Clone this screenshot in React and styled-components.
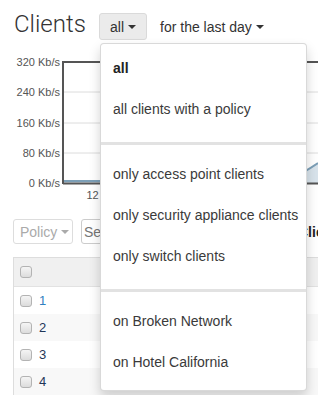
import React from "react";
import styled, { createGlobalStyle } from "styled-components";

const Global = createGlobalStyle`
  html, body { margin: 0; padding: 0; background: #fff; }
  body {
    font-family: "Liberation Sans", Arial, sans-serif;
    font-size: 14px;
    color: #333;
    overflow: hidden;
    width: 318px;
    height: 395px;
  }
  * { box-sizing: border-box; }
`;

const Page = styled.div`
  width: 318px;
  height: 395px;
  overflow: hidden;
  position: relative;
`;

const Header = styled.div`
  display: flex;
  align-items: flex-start;
  padding: 13px 0 0 14px;
  height: 40px;
`;

const Title = styled.h1`
  margin: -3px 0 0 0;
  font-family: Roboto, "Liberation Sans", sans-serif;
  font-weight: 300;
  font-size: 24px;
  line-height: 28px;
  color: #333;
  width: 85px;
`;

const MenuAnchor = styled.div`
  position: relative;
`;

const FilterButton = styled.button`
  display: flex;
  align-items: center;
  height: 27px;
  padding: 0 10px;
  margin: 0 ${(p) => (p.$gap ? "0 0 2px" : "0")};
  font-family: "Liberation Sans", Arial, sans-serif;
  font-size: 14px;
  color: #333;
  background: ${(p) => (p.$active ? "#ebebeb" : "transparent")};
  border: 1px solid ${(p) => (p.$active ? "#dadada" : "transparent")};
  border-radius: 3px;
  cursor: pointer;
`;

const Caret = styled.span`
  display: inline-block;
  width: 0;
  height: 0;
  margin-left: 4px;
  border-top: 4px solid ${(p) => p.$color || "#333"};
  border-left: 4px solid transparent;
  border-right: 4px solid transparent;
`;

const Menu = styled.ul`
  position: absolute;
  top: calc(100% + 3px);
  left: 1px;
  width: 207px;
  margin: 0;
  padding: 4px 0 7px;
  list-style: none;
  background: #fff;
  border: 1px solid rgba(0, 0, 0, 0.15);
  border-radius: 4px;
  box-shadow: 0 6px 12px rgba(0, 0, 0, 0.175);
  z-index: 10;
`;

const MenuItem = styled.li`
  height: 41px;
  line-height: 41px;
  padding: 0 12px;
  font-size: 14px;
  white-space: nowrap;
  color: ${(p) => (p.$selected ? "#222" : "#3a3a3a")};
  font-weight: ${(p) => (p.$selected ? 700 : 400)};
`;

const Divider = styled.li`
  height: 3px;
  margin: 12px 0 9px;
  background: #e2e2e2;
`;

const ChartBox = styled.div`
  margin-top: 10px;
  height: 155px;
`;

const Toolbar = styled.div`
  display: flex;
  align-items: center;
  margin: 14px 0 0 13px;
  height: 25px;
  gap: 8px;
`;

const PolicyButton = styled.button`
  display: flex;
  align-items: center;
  height: 25px;
  width: 60px;
  padding: 0 6px;
  font-family: "Liberation Sans", Arial, sans-serif;
  font-size: 14px;
  color: #aaa;
  background: #fff;
  border: 1px solid #ddd;
  border-radius: 3px;
`;

const Search = styled.input`
  height: 25px;
  width: 200px;
  padding: 0 2px;
  font-family: "Liberation Sans", Arial, sans-serif;
  font-size: 14px;
  color: #555;
  border: 1px solid #ccc;
  border-radius: 3px;
  flex: none;
`;

const CountLabel = styled.span`
  margin-left: 9px;
  font-weight: 700;
  font-size: 14px;
  color: #222;
  white-space: nowrap;
`;

const Table = styled.div`
  margin: 13px 0 0 13px;
  border-left: 1px solid #ddd;
  border-top: 1px solid #ddd;
  width: 400px;
`;

const Row = styled.div`
  display: flex;
  align-items: center;
  height: ${(p) => (p.$head ? "29px" : "27px")};
  padding-left: 6px;
  background: ${(p) => (p.$head ? "#f0f0f0" : p.$striped ? "#f8f8f8" : "#fff")};
  border-bottom: ${(p) => (p.$head ? "1px solid #e2e2e2" : "none")};
`;

const Check = styled.span`
  display: inline-block;
  width: 12px;
  height: 12px;
  border: 1px solid #b3b3b3;
  border-radius: 3px;
  background: linear-gradient(#f5f5f5, #dcdcdc);
`;

const IdLink = styled.a`
  margin-left: 7px;
  font-size: 13px;
  color: ${(p) => p.$color};
  text-decoration: none;
`;

const gridYs = [12, 42, 73, 103, 133];
const labels = ["320 Kb/s", "240 Kb/s", "160 Kb/s", "80 Kb/s", "0 Kb/s"];

function Chart() {
  return (
    <svg width="318" height="155" viewBox="0 0 318 155">
      {gridYs.slice(1, 4).map((y) => (
        <line key={y} x1="63" x2="318" y1={y} y2={y} stroke="#dcdcdc" strokeWidth="1" />
      ))}
      {labels.map((t, i) => (
        <text
          key={t}
          x="60"
          y={gridYs[i] + 4}
          textAnchor="end"
          fontFamily="Liberation Sans, Arial, sans-serif"
          fontSize="11"
          fill="#555"
        >
          {t}
        </text>
      ))}
      <path d="M64 131 L270 131 C290 131 300 125 318 113 L318 133 L64 133 Z" fill="#d8e3eb" />
      <path d="M64 131 L270 131 C290 131 300 125 318 113" fill="none" stroke="#7c9fb7" strokeWidth="2" />
      <line x1="63" x2="318" y1="12" y2="12" stroke="#555" strokeWidth="2" />
      <line x1="63" x2="63" y1="11" y2="134" stroke="#555" strokeWidth="2" />
      <line x1="63" x2="318" y1="133.5" y2="133.5" stroke="#555" strokeWidth="2" />
      <text x="92.5" y="149" textAnchor="middle" fontFamily="Liberation Sans, Arial, sans-serif" fontSize="11" fill="#555">
        12
      </text>
    </svg>
  );
}

const menuGroups = [
  ["all", "all clients with a policy"],
  ["only access point clients", "only security appliance clients", "only switch clients"],
  ["on Broken Network", "on Hotel California"],
];

const rows = [
  { id: 1, color: "#2f80c0" },
  { id: 2, color: "#1f3658" },
  { id: 3, color: "#1f3658" },
  { id: 4, color: "#1f3658" },
];

export default function App() {
  return (
    <>
      <Global />
      <Page>
        <Header>
          <Title>Clients</Title>
          <MenuAnchor>
            <FilterButton $active>
              all
              <Caret />
            </FilterButton>
            <Menu>
              {menuGroups.map((g, gi) => (
                <React.Fragment key={gi}>
                  {gi > 0 && <Divider />}
                  {g.map((item) => (
                    <MenuItem key={item} $selected={item === "all"}>
                      {item}
                    </MenuItem>
                  ))}
                </React.Fragment>
              ))}
            </Menu>
          </MenuAnchor>
          <FilterButton $gap>
            for the last day
            <Caret />
          </FilterButton>
        </Header>
        <ChartBox>
          <Chart />
        </ChartBox>
        <Toolbar>
          <PolicyButton>
            Policy
            <Caret $color="#aaa" />
          </PolicyButton>
          <Search defaultValue="" placeholder="Search clients" />
          <CountLabel>Clients</CountLabel>
        </Toolbar>
        <Table>
          <Row $head>
            <Check />
          </Row>
          {rows.map((r, i) => (
            <Row key={r.id} $striped={i % 2 === 1}>
              <Check />
              <IdLink href="#" $color={r.color}>
                {r.id}
              </IdLink>
            </Row>
          ))}
        </Table>
      </Page>
    </>
  );
}
